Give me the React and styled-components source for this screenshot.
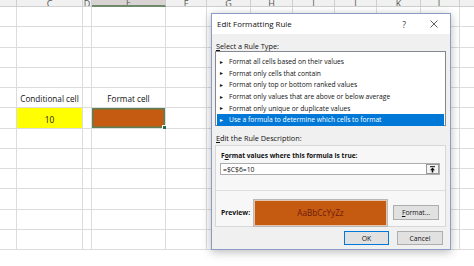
import React from 'react';
import styled, { createGlobalStyle } from 'styled-components';

const GlobalStyle = createGlobalStyle`
  html, body { margin: 0; padding: 0; background: #fff; overflow: hidden; }
  body { width: 474px; height: 266px; font-family: "Open Sans", "Noto Sans", sans-serif; }
`;

const COLS = [
  { name: '', w: 17 },
  { name: 'C', w: 66 },
  { name: 'D', w: 9 },
  { name: 'E', w: 74, sel: true },
  { name: 'F', w: 41 },
  { name: 'G', w: 44 },
  { name: 'H', w: 42 },
  { name: 'I', w: 42 },
  { name: 'J', w: 42 },
  { name: 'K', w: 44 },
  { name: 'L', w: 39 },
  { name: '', w: 60 },
];

const ROW_COUNT = 12;

const Screen = styled.div`
  position: relative;
  width: 474px;
  height: 266px;
  overflow: hidden;
`;

const Sheet = styled.div`
  display: grid;
  grid-template-columns: ${COLS.map((c) => c.w + 'px').join(' ')};
  grid-auto-rows: 20.25px;
  grid-template-rows: 7px;
`;

const HeadCell = styled.div`
  box-sizing: border-box;
  height: 7px;
  overflow: hidden;
  display: flex;
  align-items: flex-end;
  justify-content: center;
  background: ${(p) => (p.$sel ? '#d9d3d3' : '#f1f1f1')};
  border-right: 1px solid #cfcfcf;
  border-bottom: ${(p) => (p.$sel ? '2px solid #6f8a6a' : '1px solid #cfcfcf')};
  color: #555;
  font-size: 9px;
  span {
    line-height: 9px;
    margin-bottom: -2px;
  }
`;

const Cell = styled.div`
  position: relative;
  box-sizing: border-box;
  border-right: 1px solid #dcdcdc;
  border-bottom: 1px solid #dcdcdc;
  background: ${(p) => p.$fill || 'transparent'};
  display: flex;
  align-items: flex-end;
  justify-content: center;
  padding-bottom: 3px;
  font-size: 8.2px;
  color: #111;
  ${(p) => p.$active && `box-shadow: inset 0 0 0 1.5px #5e7f55;`}
`;

const Handle = styled.span`
  position: absolute;
  right: -2px;
  bottom: -2px;
  width: 3px;
  height: 3px;
  background: #217346;
  border: 1px solid #fff;
`;

const Dialog = styled.div`
  position: absolute;
  left: 211px;
  top: 13px;
  width: 240px;
  height: 237px;
  box-sizing: border-box;
  border: 1px solid #8d9cc7;
  background: #f0f0f0;
  box-shadow: 0 2px 9px rgba(0, 0, 0, 0.28);
  display: flex;
  flex-direction: column;
  color: #111;
`;

const TitleBar = styled.div`
  height: 20px;
  background: #fff;
  display: flex;
  align-items: center;
  padding: 0 6px 0 5px;
  font-size: 7.9px;
`;

const TitleButtons = styled.div`
  margin-left: auto;
  display: flex;
  gap: 10px;
`;

const TitleBtn = styled.div`
  width: 20px;
  display: flex;
  justify-content: center;
  align-items: center;
  font-size: 8.5px;
  color: #333;
`;

const Body = styled.div`
  padding: 0 4px 0 3px;
  display: flex;
  flex-direction: column;
`;

const Label = styled.div`
  height: 9px;
  line-height: 9px;
  font-size: ${(p) => (p.$bold ? 6.6 : 7.3)}px;
  margin-top: ${(p) => p.$mt || 0}px;
  margin-bottom: ${(p) => p.$mb || 0}px;
  padding-left: 1px;
  font-weight: ${(p) => (p.$bold ? 700 : 400)};
`;

const RuleList = styled.div`
  height: 75px;
  box-sizing: border-box;
  border: 1px solid #828790;
  background: #fff;
  padding: 4px 1px 1px;
`;

const RuleItem = styled.div`
  height: 11.6px;
  display: flex;
  align-items: center;
  padding-left: 2px;
  font-size: 6.7px;
  background: ${(p) => (p.$sel ? '#0078d7' : 'transparent')};
  color: ${(p) => (p.$sel ? '#fff' : '#111')};
  b {
    font-weight: 400;
    font-size: 5px;
    width: 10px;
  }
`;

const DescBox = styled.div`
  height: 82px;
  box-sizing: border-box;
  border: 1px solid #d7d7d7;
  background: #f7f7f7;
  display: flex;
  flex-direction: column;
`;

const FormulaPart = styled.div`
  padding: 5px 5px 0 4px;
  height: 39px;
  border-bottom: 1px solid #dedede;
`;

const FormulaInput = styled.div`
  margin-top: 3px;
  height: 12px;
  box-sizing: border-box;
  border: 1px solid #adadad;
  background: #fff;
  display: flex;
  align-items: center;
  padding-left: 2px;
  font-size: 6.8px;
`;

const RefButton = styled.div`
  margin-left: auto;
  width: 13px;
  height: 10px;
  box-sizing: border-box;
  border: 1px solid #9a9a9a;
  background: #f4f4f4;
  display: flex;
  align-items: center;
  justify-content: center;
`;

const PreviewRow = styled.div`
  flex: 1;
  display: flex;
  align-items: center;
  padding: 8px 6px 0 5px;
`;

const PreviewLabel = styled.div`
  width: 33px;
  font-size: 6.8px;
  font-weight: 700;
`;

const Swatch = styled.div`
  width: 133px;
  height: 26px;
  box-sizing: border-box;
  background: #c55a11;
  border: 1px solid #e3c7b1;
  outline: 1px solid #b9b9b9;
  display: flex;
  align-items: center;
  justify-content: center;
  font-size: 8.2px;
  color: #6e1a0c;
`;

const Button = styled.div`
  width: ${(p) => p.$w || 46}px;
  height: ${(p) => p.$h || 14}px;
  box-sizing: border-box;
  border: 1px solid ${(p) => (p.$focus ? '#0078d7' : '#adadad')};
  background: #e1e1e1;
  display: flex;
  align-items: center;
  justify-content: center;
  font-size: 6.8px;
  color: #111;
  margin-left: ${(p) => p.$ml || 0}px;
`;

const ButtonRow = styled.div`
  display: flex;
  justify-content: flex-end;
  gap: 8px;
  margin-top: 4px;
  padding-right: 3px;
`;

const U = styled.span`
  text-decoration: underline;
  text-underline-offset: 1px;
`;

const RULES = [
  'Format all cells based on their values',
  'Format only cells that contain',
  'Format only top or bottom ranked values',
  'Format only values that are above or below average',
  'Format only unique or duplicate values',
  'Use a formula to determine which cells to format',
];

function Spreadsheet() {
  const rows = [];
  for (let r = 0; r < ROW_COUNT; r++) {
    COLS.forEach((c, i) => {
      let content = null;
      let fill;
      let active = false;
      if (r === 4 && c.name === 'C') content = 'Conditional cell';
      if (r === 4 && c.name === 'E') content = 'Format cell';
      if (r === 5 && c.name === 'C') {
        fill = '#ffff00';
        content = '10';
      }
      if (r === 5 && c.name === 'E') {
        fill = '#c55a11';
        active = true;
      }
      rows.push(
        <Cell key={r + '-' + i} $fill={fill} $active={active}>
          {content}
          {active && <Handle />}
        </Cell>
      );
    });
  }
  return (
    <Sheet>
      {COLS.map((c, i) => (
        <HeadCell key={'h' + i} $sel={c.sel}>
          <span>{c.name}</span>
        </HeadCell>
      ))}
      {rows}
    </Sheet>
  );
}

function FormattingDialog() {
  return (
    <Dialog>
      <TitleBar>
        Edit Formatting Rule
        <TitleButtons>
          <TitleBtn>?</TitleBtn>
          <TitleBtn>
            <svg width="8" height="8" viewBox="0 0 8 8">
              <path d="M0.5 0.5 L7.5 7.5 M7.5 0.5 L0.5 7.5" stroke="#333" strokeWidth="0.8" />
            </svg>
          </TitleBtn>
        </TitleButtons>
      </TitleBar>
      <Body>
        <Label $mt={8}>
          <U>S</U>elect a Rule Type:
        </Label>
        <RuleList>
          {RULES.map((t, i) => (
            <RuleItem key={t} $sel={i === RULES.length - 1}>
              <b>►</b>
              {t}
            </RuleItem>
          ))}
        </RuleList>
        <Label $mt={8} $mb={2}>
          <U>E</U>dit the Rule Description:
        </Label>
        <DescBox>
          <FormulaPart>
            <Label $bold>
              F<U>o</U>rmat values where this formula is true:
            </Label>
            <FormulaInput>
              =$C$6=10
              <RefButton>
                <svg width="7" height="7" viewBox="0 0 7 7">
                  <path d="M1 0.7 H6" stroke="#111" strokeWidth="1" />
                  <path d="M3.5 1.6 L6 4.2 H4.3 V6.6 H2.7 V4.2 H1 Z" fill="#111" />
                </svg>
              </RefButton>
            </FormulaInput>
          </FormulaPart>
          <PreviewRow>
            <PreviewLabel>Preview:</PreviewLabel>
            <Swatch>AaBbCcYyZz</Swatch>
            <Button $w={46} $h={15} $ml={6}>
              <U>F</U>ormat...
            </Button>
          </PreviewRow>
        </DescBox>
        <ButtonRow>
          <Button $w={45} $focus>
            OK
          </Button>
          <Button $w={46}>Cancel</Button>
        </ButtonRow>
      </Body>
    </Dialog>
  );
}

export default function App() {
  return (
    <Screen>
      <GlobalStyle />
      <Spreadsheet />
      <FormattingDialog />
    </Screen>
  );
}
